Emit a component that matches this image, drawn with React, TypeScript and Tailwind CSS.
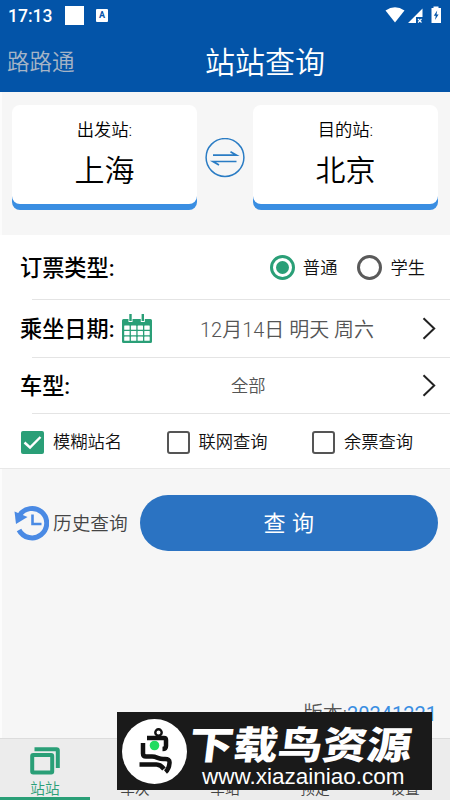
import React, { useState } from 'react';

interface StationCardProps {
  label: string;
  station: string;
}

const StationCard: React.FC<StationCardProps> = ({ label, station }) => (
  <button className="w-[185px] h-[99px] rounded-[8px] bg-white shadow-[0_6px_0_#3a8ee2] flex flex-col items-center pt-[14px] font-[350] text-black">
    <span className="text-[17.3px] leading-[22px]">{label}</span>
    <span className="mt-[11px] text-[30px] leading-[38px]">{station}</span>
  </button>
);

const SwapIcon = () => (
  <svg className="w-10 h-10" viewBox="0 0 40 40" fill="none" stroke="#2a7cc4" strokeWidth="1.5">
    <circle cx="20" cy="19.5" r="18.9" />
    <path d="M8 17.2h23.500l-6-3.500M31.500 23.500H8l6 3.500" strokeWidth="1.700" />
  </svg>
);

const CalendarIcon = () => (
  <svg className="w-[30px] h-[30px]" viewBox="0 0 30 30">
    <path d="M1.5 5h27a1.5 1.5 0 0 1 1.5 1.5V27.500a1.500 1.500 0 0 1-1.500 1.500h-27A1.500 1.500 0 0 1 0 27.500v-21A1.500 1.500 0 0 1 1.500 5z" fill="#2a9f77" />
    <path d="M6.500 0h4v8h-4zM18.800 0h4v8h-4z" fill="#fff" />
    <path d="M7.300 0h2.400v7H7.300zM19.600 0H22v7h-2.400z" fill="#2a9f77" />
    {[11.5, 17, 22.500].map((y) =>
      [2.200, 8.900, 15.600, 22.300].map((x) => (
        <rect key={`${x}-${y}`} x={x} y={y} width="5.400" height="4.200" rx="0.500" fill="#fff" />
      ))
    )}
  </svg>
);

const HistoryIcon = () => (
  <svg className="w-9 h-9" viewBox="0 0 36 36" fill="none">
    <path d="M6.500 10.500A14.700 14.700 0 1 1 6 25" stroke="#4a8ae4" strokeWidth="5" />
    <path d="M1.500 6.500L14.500 12L3 19z" fill="#4a8ae4" />
    <path d="M19.500 9.500V19h9" stroke="#4a8ae4" strokeWidth="2.600" />
  </svg>
);

const Chevron = () => (
  <svg className="w-[14px] h-[24px]" viewBox="0 0 14 24" fill="none" stroke="#222" strokeWidth="2">
    <path d="M1.500 1.200L12.200 11.500L1.500 21.800" />
  </svg>
);

const Radio = ({ checked }: { checked: boolean }) => (
  <span
    className={`w-[25px] h-[25px] rounded-full border-3 flex items-center justify-center ${
      checked ? 'border-[#2a9f77]' : 'border-[#5a5a5a]'
    }`}
  >
    {checked && <span className="w-[13px] h-[13px] rounded-full bg-[#2a9f77]" />}
  </span>
);

interface CheckProps {
  label: string;
  checked: boolean;
  onToggle: () => void;
}

const Check: React.FC<CheckProps> = ({ label, checked, onToggle }) => (
  <button onClick={onToggle} className="w-[145.500px] shrink-0 flex items-center text-[17.300px] text-[#111]">
    {checked ? (
      <svg className="w-[23px] h-[23px]" viewBox="0 0 23 23">
        <rect width="23" height="23" rx="2" fill="#2a9f77" />
        <path d="M3.500 11.500l5.500 5L19.500 6" fill="none" stroke="#fff" strokeWidth="2.400" />
      </svg>
    ) : (
      <span className="w-[23px] h-[23px] rounded-[3px] border-[2.500px] border-[#555]" />
    )}
    <span className="ml-[9px] pt-[2px] font-[350] whitespace-nowrap">{label}</span>
  </button>
);

// bird emblem of the download site
const BirdLogo = () => (
  <svg className="w-[65px] h-[65px] shrink-0" viewBox="0 0 65 65" fill="none">
    <circle cx="32.500" cy="32.500" r="32.500" fill="#fff" />
    <g stroke="#111" strokeWidth="4.500">
      <circle cx="36.500" cy="13.500" r="3.200" strokeWidth="2.400" />
      <path d="M25 19h17q2 0 2 2v6q0 3-3.500 3" />
      <path d="M21 24v10.500q0 3 3 3h6c5 0 7 3 12 2.500q6-0.500 5.500 4q-0.500 6-4 9" />
      <path d="M17.500 45.500h17q4 0 7.500 4.500" />
    </g>
    <circle cx="32.500" cy="26.500" r="4.800" fill="#22dc60" />
  </svg>
);

const tabs = ['站站', '车次', '车站', '预定', '设置'];

const App: React.FC = () => {
  const [activeTab, setActiveTab] = useState(0);
  const [student, setStudent] = useState(false);
  const [options, setOptions] = useState([true, false, false]);
  const optionLabels = ['模糊站名', '联网查询', '余票查询'];

  return (
    <div className="relative w-[450px] h-[800px] overflow-hidden flex flex-col bg-[#f6f6f6] font-[Roboto,'Noto_Sans_CJK_SC',sans-serif]">
      <header className="h-[92px] shrink-0 bg-[#0354a8] text-white">
        <div className="h-8 flex items-center pl-2 pr-[8px]">
          <span className="w-[57px] text-[17.500px] leading-8 font-medium">17:13</span>
          <span className="w-[19px] h-[19px] -mt-[2px] bg-white" />
          <span className="ml-3 w-3 h-[13px] -mt-[2px] rounded-[1px] bg-white text-[#0354a8] text-[9px] leading-[13px] font-bold text-center">A</span>
          <svg className="ml-auto -mt-[2px] w-[57px] h-[18px]" viewBox="0 0 57 18" fill="#fff">
            <path d="M0.500 4.500Q10 -2 19.500 4.500L10 16.500z" />
            <path d="M23 17L37.500 2.500V11H31v6z" />
            <path d="M33 13l3.500 3.500M36.500 13L33 16.500" stroke="#fff" strokeWidth="1.100" />
            <path d="M48.500 2V0.500h5V2H56v15H46.500V2z" />
            <path d="M52.200 4.500L48.800 9.800h2L50 14l3.600-5.400h-2.100z" fill="#0354a8" />
          </svg>
        </div>
        <div className="h-[60px] relative flex items-center justify-center">
          <span className="absolute left-[7px] text-[22.500px] leading-[60px] font-[350] text-[#a6b4c6]">路路通</span>
          <h1 className="ml-[80px] pt-[2px] text-[30px] leading-[58px] font-[350]">站站查询</h1>
        </div>
      </header>

      <section className="h-[143px] shrink-0 flex items-start justify-between border-l-2 border-[#fcfcfc] pl-[10px] pr-3 pt-[13px]">
        <StationCard label="出发站:" station="上海" />
        <button className="mt-[33px]">
          <SwapIcon />
        </button>
        <StationCard label="目的站:" station="北京" />
      </section>

      <section className="h-[234px] shrink-0 bg-white border-b border-[#e8e8e8]">
        <div className="h-[64px] flex items-center pl-5 pr-[25px]">
          <span className="pt-[4px] text-[22.200px] font-medium text-black">订票类型:</span>
          <div className="ml-auto flex items-center gap-[20px] text-[17.300px] font-[350] text-[#111]">
            <button onClick={() => setStudent(false)} className="flex items-center gap-2">
              <Radio checked={!student} />
              <span className="pt-[3px]">普通</span>
            </button>
            <button onClick={() => setStudent(true)} className="flex items-center gap-2">
              <Radio checked={student} />
              <span className="pt-[3px]">学生</span>
            </button>
          </div>
        </div>
        <div className="ml-8 h-px bg-[#e4e4e4]" />
        <div className="h-[57px] flex items-center pl-5 pr-[14px]">
          <span className="w-[102px] pt-[3px] text-[22.200px] font-medium text-black">乘坐日期:</span>
          <CalendarIcon />
          <span className="flex-1 pl-[48px] pt-[3px] text-[20px] font-[350] text-[#555] whitespace-nowrap">12月14日 明天 周六</span>
          <Chevron />
        </div>
        <div className="ml-8 h-px bg-[#e4e4e4]" />
        <div className="h-[55px] flex items-center pl-5 pr-[14px]">
          <span className="w-[211px] pt-[3px] text-[22.200px] font-medium text-black">车型:</span>
          <span className="flex-1 pt-[3px] text-[17.300px] font-[350] text-[#555]">全部</span>
          <Chevron />
        </div>
        <div className="ml-8 h-px bg-[#e4e4e4]" />
        <div className="h-[55px] flex items-center pl-[21px] pt-px">
          {optionLabels.map((label, i) => (
            <Check
              key={label}
              label={label}
              checked={options[i]}
              onToggle={() => setOptions((prev) => prev.map((v, n) => (n === i ? !v : v)))}
            />
          ))}
        </div>
      </section>

      <main className="flex-1 flex flex-col border-l-2 border-[#fcfcfc]">
        <div className="mt-[26px] h-14 flex items-center pl-[11px] pr-3">
          <button className="flex items-center text-[18.700px] font-[350] text-[#444]">
            <HistoryIcon />
            <span className="ml-[4px] pt-[3px]">历史查询</span>
          </button>
          <button className="ml-auto w-[298px] h-14 rounded-full bg-[#2b73c2] text-white text-[22px] leading-[54px] pt-[2px] tracking-[0.500px]">查 询</button>
        </div>
        <div className="mt-auto h-[38px] pr-[13px] text-right text-[20px] leading-[28px] font-[350] text-[#555]">
          版本:<span className="font-normal text-[#3a8ee2]">20241221</span>
        </div>
      </main>

      <nav className="h-[62px] shrink-0 flex bg-[#ececec] border-t border-[#dcdcdc]">
        {tabs.map((tab, i) => (
          <button
            key={tab}
            onClick={() => setActiveTab(i)}
            className={`w-[90px] flex flex-col items-center text-[14.700px] leading-[18px] font-[350] border-b-[3px] ${
              i === activeTab ? 'text-[#2a9f77] border-[#2a9f77]' : 'text-[#444] border-transparent'
            }`}
          >
            <svg className="mt-2 w-[30px] h-[28px] shrink-0" viewBox="0 0 30 28" fill="none" stroke="currentColor" strokeWidth="4">
              <rect x="2.200" y="8" width="20" height="17.500" rx="1" />
              <path d="M4.500 2.200H26.500q1.300 0 1.300 1.300V21" />
            </svg>
            <span className="mt-[5px]">{tab}</span>
          </button>
        ))}
      </nav>

      <div className="absolute left-[117px] top-[712px] w-[315px] h-[78px] bg-[#1a1a1a] text-white flex items-center pl-[5px]">
        <BirdLogo />
        <div className="flex flex-col items-start pt-[15px]">
          <div className="h-[37px] ml-[2px] -skew-x-6 font-black text-[44.500px] leading-[37px] scale-y-[0.86] whitespace-nowrap">下载鸟资源</div>
          <div className="ml-[15px] font-['Liberation_Sans',sans-serif] text-[22.500px] leading-[24px] whitespace-nowrap">www.xiazainiao.com</div>
        </div>
      </div>
    </div>
  );
};

export default App;
